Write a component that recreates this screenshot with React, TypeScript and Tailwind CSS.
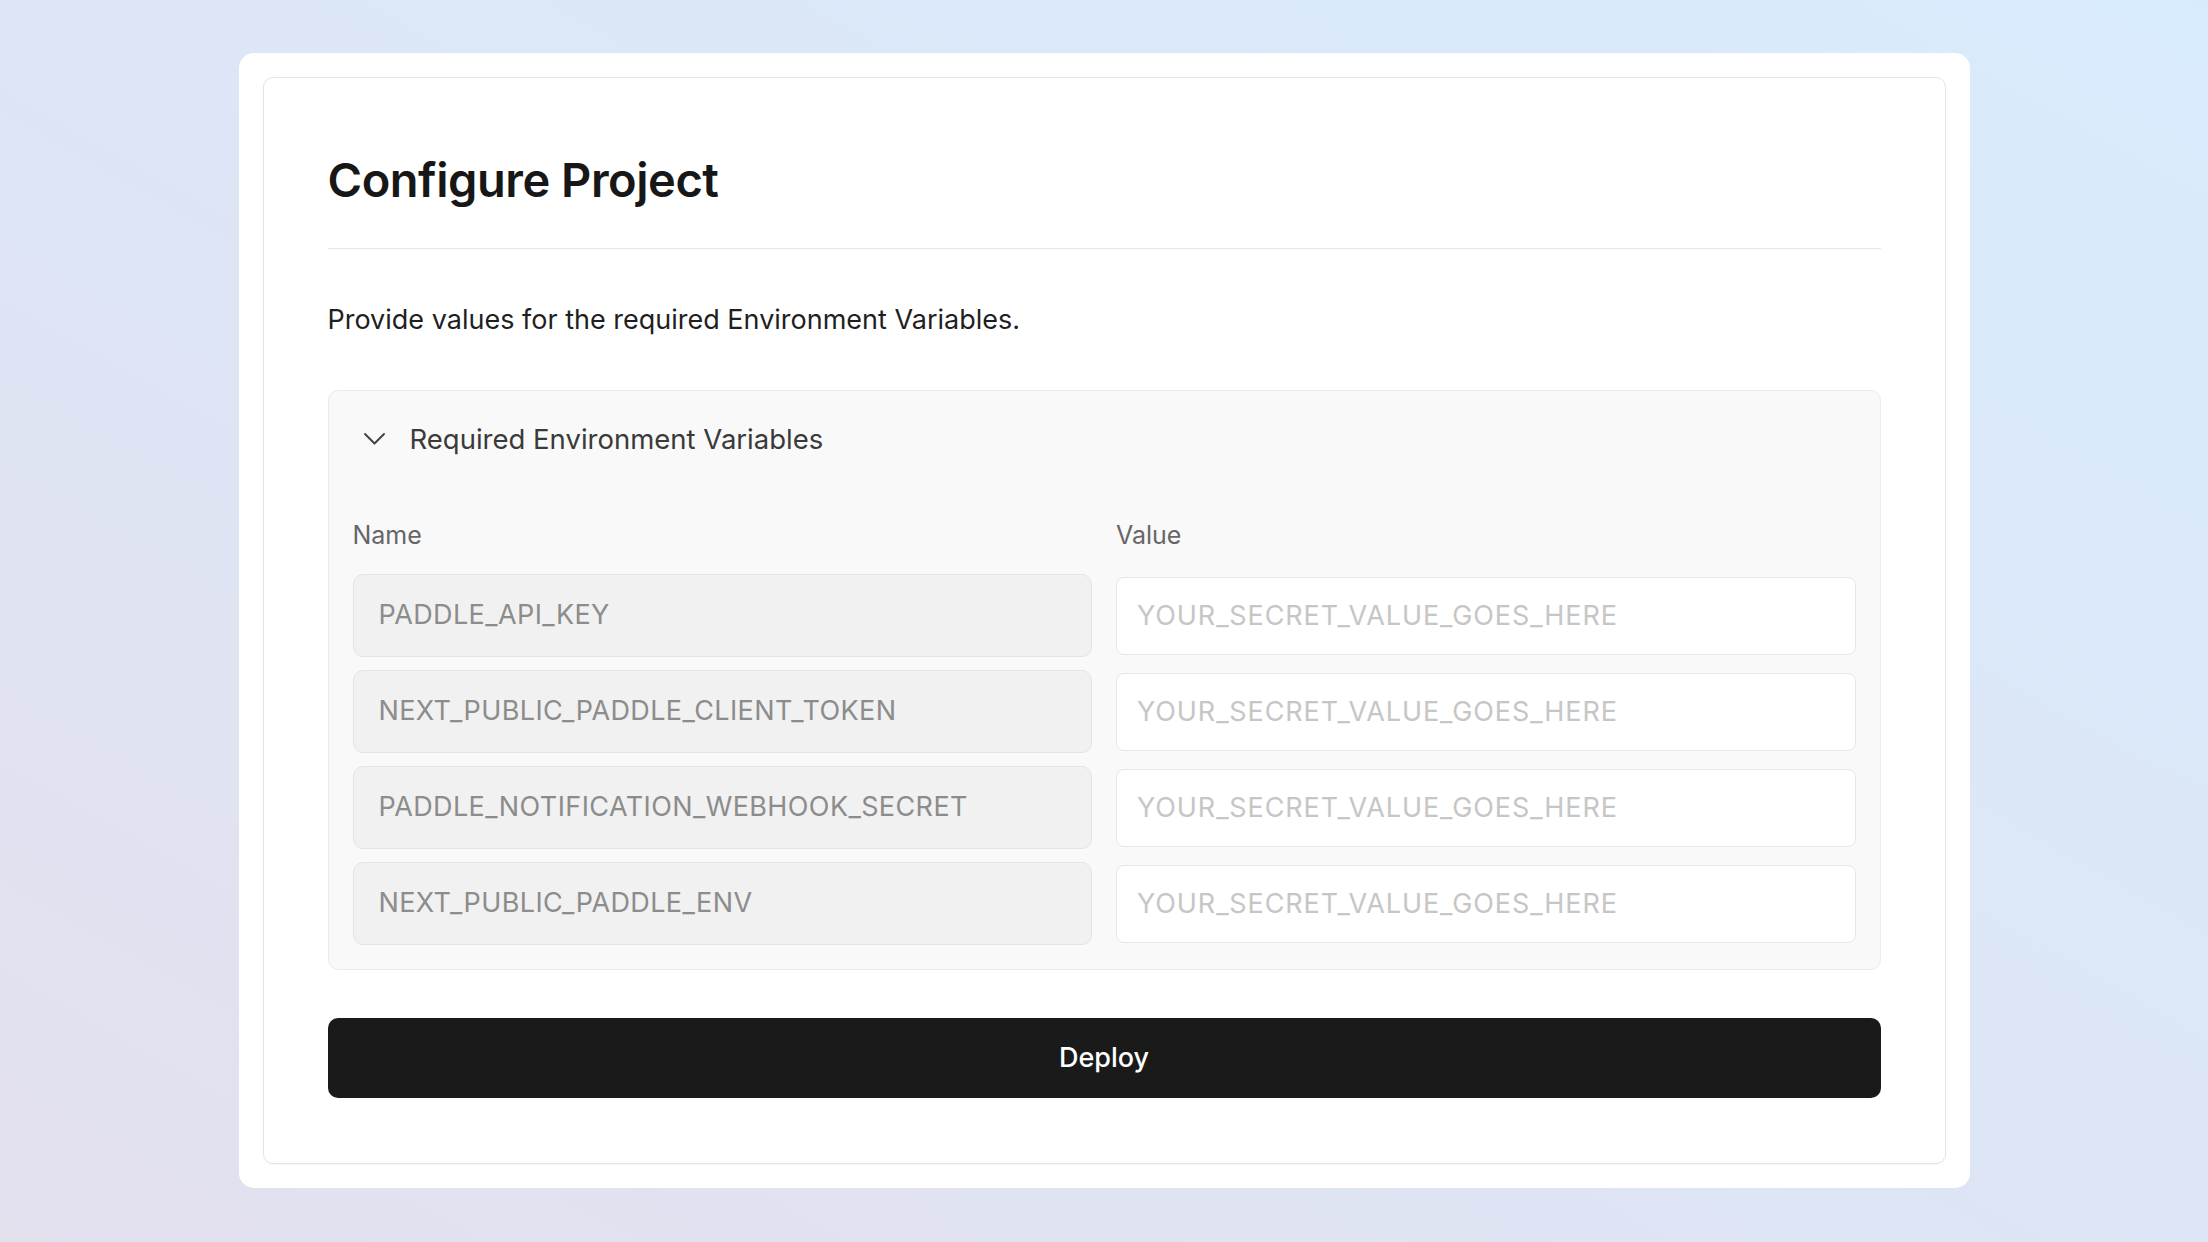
const VARIABLES = [
  "PADDLE_API_KEY",
  "NEXT_PUBLIC_PADDLE_CLIENT_TOKEN",
  "PADDLE_NOTIFICATION_WEBHOOK_SECRET",
  "NEXT_PUBLIC_PADDLE_ENV",
] as const;

const FONT = "font-['Inter','Liberation_Sans',sans-serif]";

export default function App() {
  return (
    <main
      className={`${FONT} min-h-[1242px] w-full bg-linear-to-tr from-[#e3e0ee] via-[#dde6f6] to-[#d8ebfc] pt-[53px] pb-[54px]`}
    >
      <div className="mx-auto w-[1731px] rounded-[15px] bg-white p-6">
        <div className="rounded-[10px] border border-[#e4e4e4] px-16 pt-[78px] pb-[65px] shadow-[0_1px_1px_rgba(0,0,0,0.04)]">
          <h1 className="text-[47px] leading-none font-semibold tracking-[-0.01em] text-[#171717]">
            Configure Project
          </h1>
          <div className="mt-[45px] h-px bg-[#e5e5e5]" />
          <p className="mt-[51px] text-[27px] leading-[39px] text-[#1f1f1f]">
            Provide values for the required Environment Variables.
          </p>

          <section className="mt-[51px] rounded-[10px] border border-[#ebebeb] bg-[#f9f9f9] px-6 pb-6">
            <button className="mt-[28px] flex h-10 items-center gap-6 pl-[10px]">
              <svg width="23" height="14" viewBox="0 0 23 14" fill="none" aria-hidden>
                <path d="M2 2l9.5 9.5L21 2" stroke="#444" strokeWidth="2" strokeLinecap="round" strokeLinejoin="round" />
              </svg>
              <span className="text-[27.5px] leading-10 text-[#3a3a3a]">Required Environment Variables</span>
            </button>

            <div className="mt-[58px] grid grid-cols-2 gap-6">
              <span className="text-[25px] leading-9 text-[#666]">Name</span>
              <span className="text-[25px] leading-9 text-[#666]">Value</span>
            </div>

            <div className="mt-[21px] flex flex-col gap-[13px]">
              {VARIABLES.map((name) => (
                <div key={name} className="grid grid-cols-2 items-center gap-6">
                  <div className="flex h-[83px] items-center rounded-[10px] border border-[#e4e4e4] bg-[#f1f1f1] px-[25px] text-[27px] tracking-[0.4px] text-[#8c8c8c]">
                    {name}
                  </div>
                  <input
                    className="h-[78px] w-full rounded-[8px] border border-[#e6e6e6] bg-white px-5 text-[27px] tracking-[0.9px] text-[#333] outline-none placeholder:text-[#c6c6c6]"
                    placeholder="YOUR_SECRET_VALUE_GOES_HERE"
                  />
                </div>
              ))}
            </div>
          </section>

          <button className="mt-12 flex h-[80px] w-full items-center justify-center rounded-[10px] bg-[#1a1a1a] text-[27px] font-medium text-white">
            Deploy
          </button>
        </div>
      </div>
    </main>
  );
}
